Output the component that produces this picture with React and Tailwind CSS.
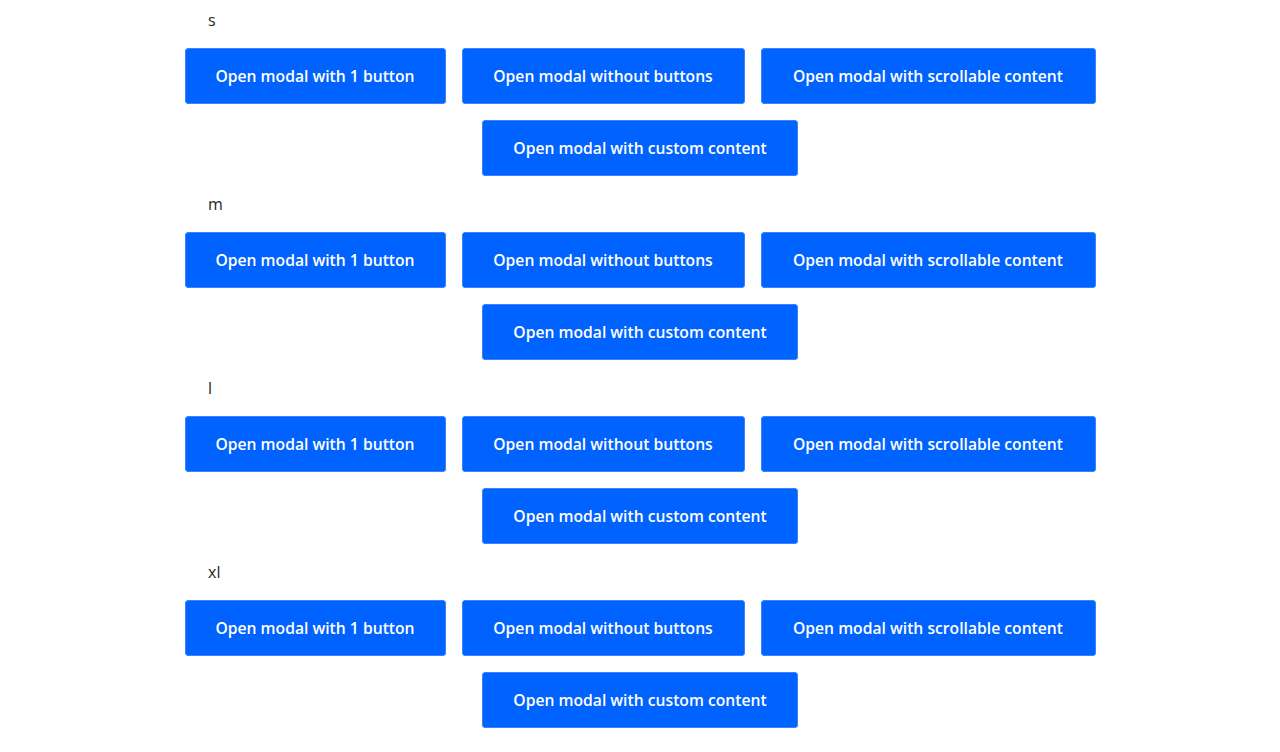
const sizes = ['s', 'm', 'l', 'xl'];

const buttons = [
  { label: 'Open modal with 1 button', w: 'w-[261px]' },
  { label: 'Open modal without buttons', w: 'w-[283px]' },
  { label: 'Open modal with scrollable content', w: 'w-[335px]' },
  { label: 'Open modal with custom content', w: 'w-[316px]' },
];

function ModalButton({ label, w }) {
  return (
    <button
      type="button"
      className={`${w} h-14 shrink-0 rounded-[3px] border border-[#3a85ff] bg-[#0062ff] pt-[2px] text-[15.7px] font-semibold text-white whitespace-nowrap`}
    >
      {label}
    </button>
  );
}

export default function App() {
  return (
    <div className="min-h-[752px] bg-white font-['Open_Sans',sans-serif] text-[#1f1f1f]">
      {sizes.map((size) => (
        <section key={size} className="pt-2 pb-2">
          <div className="h-6 pl-[208px] text-[16px] leading-6">{size}</div>
          <div className="mt-4 flex flex-wrap justify-center gap-4 px-[184px]">
            {buttons.map((b) => (
              <ModalButton key={b.label} {...b} />
            ))}
          </div>
        </section>
      ))}
    </div>
  );
}
